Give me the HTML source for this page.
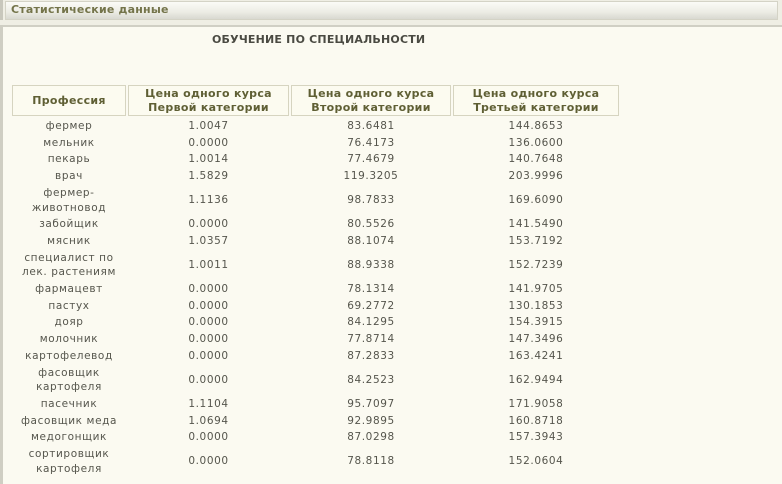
<!DOCTYPE html>
<html><head><meta charset="utf-8"><style>
html,body{margin:0;padding:0;background:#fbfaf1;width:782px;height:484px;overflow:hidden;font-family:"DejaVu Sans",Verdana,sans-serif;}
.bar{position:absolute;left:0;top:0;width:782px;height:26px;background:#efeee4;}
.bar .in{position:absolute;left:5px;top:1px;right:4px;height:17px;border:1px solid #d4d3c6;background:linear-gradient(#fbfbf7,#ecece4 60%,#d8d8d0);}
.bar .l{position:absolute;left:0;top:0;width:3px;height:20px;background:#c8c7bc;}
.bar .t{position:absolute;left:11px;top:3px;font-size:11px;font-weight:bold;color:#74744a;letter-spacing:0.2px;}
.frame{position:absolute;left:0;top:25px;width:782px;height:2px;background:#d0cfc4;}
.lb{position:absolute;left:0;top:25px;width:3px;height:459px;background:#cfcec3;}
.title{position:absolute;left:212px;top:33px;font-size:11px;font-weight:bold;color:#4a4a42;letter-spacing:0.2px;}
table{position:absolute;left:10px;top:85px;border-collapse:separate;border-spacing:2px 0;}
th{height:29px;border:1px solid #d6d4c0;background:#fcfbf0;color:#5f5f34;font-size:11px;font-weight:bold;line-height:14px;padding:0;letter-spacing:0.3px;}
td{text-align:center;font-size:10.5px;color:#55554c;line-height:14.7px;padding:1px 0;letter-spacing:0.6px;}
</style></head><body>
<div class="bar"><div class="l"></div><div class="in"></div><div class="t">Статистические данные</div></div>
<div class="frame"></div><div class="lb"></div>
<div class="title">ОБУЧЕНИЕ ПО СПЕЦИАЛЬНОСТИ</div>
<table>
<tr><th style="width:112px">Профессия</th><th style="width:159px">Цена одного курса<br>Первой категории</th><th style="width:158px">Цена одного курса<br>Второй категории</th><th style="width:164px">Цена одного курса<br>Третьей категории</th></tr>
<tr><td colspan="4" style="height:2px;padding:0;line-height:2px;font-size:1px">&nbsp;</td></tr>
<tr><td>фермер</td><td>1.0047</td><td>83.6481</td><td>144.8653</td></tr>
<tr><td>мельник</td><td>0.0000</td><td>76.4173</td><td>136.0600</td></tr>
<tr><td>пекарь</td><td>1.0014</td><td>77.4679</td><td>140.7648</td></tr>
<tr><td>врач</td><td>1.5829</td><td>119.3205</td><td>203.9996</td></tr>
<tr><td>фермер-<br>животновод</td><td>1.1136</td><td>98.7833</td><td>169.6090</td></tr>
<tr><td>забойщик</td><td>0.0000</td><td>80.5526</td><td>141.5490</td></tr>
<tr><td>мясник</td><td>1.0357</td><td>88.1074</td><td>153.7192</td></tr>
<tr><td>специалист по<br>лек. растениям</td><td>1.0011</td><td>88.9338</td><td>152.7239</td></tr>
<tr><td>фармацевт</td><td>0.0000</td><td>78.1314</td><td>141.9705</td></tr>
<tr><td>пастух</td><td>0.0000</td><td>69.2772</td><td>130.1853</td></tr>
<tr><td>дояр</td><td>0.0000</td><td>84.1295</td><td>154.3915</td></tr>
<tr><td>молочник</td><td>0.0000</td><td>77.8714</td><td>147.3496</td></tr>
<tr><td>картофелевод</td><td>0.0000</td><td>87.2833</td><td>163.4241</td></tr>
<tr><td>фасовщик<br>картофеля</td><td>0.0000</td><td>84.2523</td><td>162.9494</td></tr>
<tr><td>пасечник</td><td>1.1104</td><td>95.7097</td><td>171.9058</td></tr>
<tr><td>фасовщик меда</td><td>1.0694</td><td>92.9895</td><td>160.8718</td></tr>
<tr><td>медогонщик</td><td>0.0000</td><td>87.0298</td><td>157.3943</td></tr>
<tr><td>сортировщик<br>картофеля</td><td>0.0000</td><td>78.8118</td><td>152.0604</td></tr>
</table>
</body></html>
